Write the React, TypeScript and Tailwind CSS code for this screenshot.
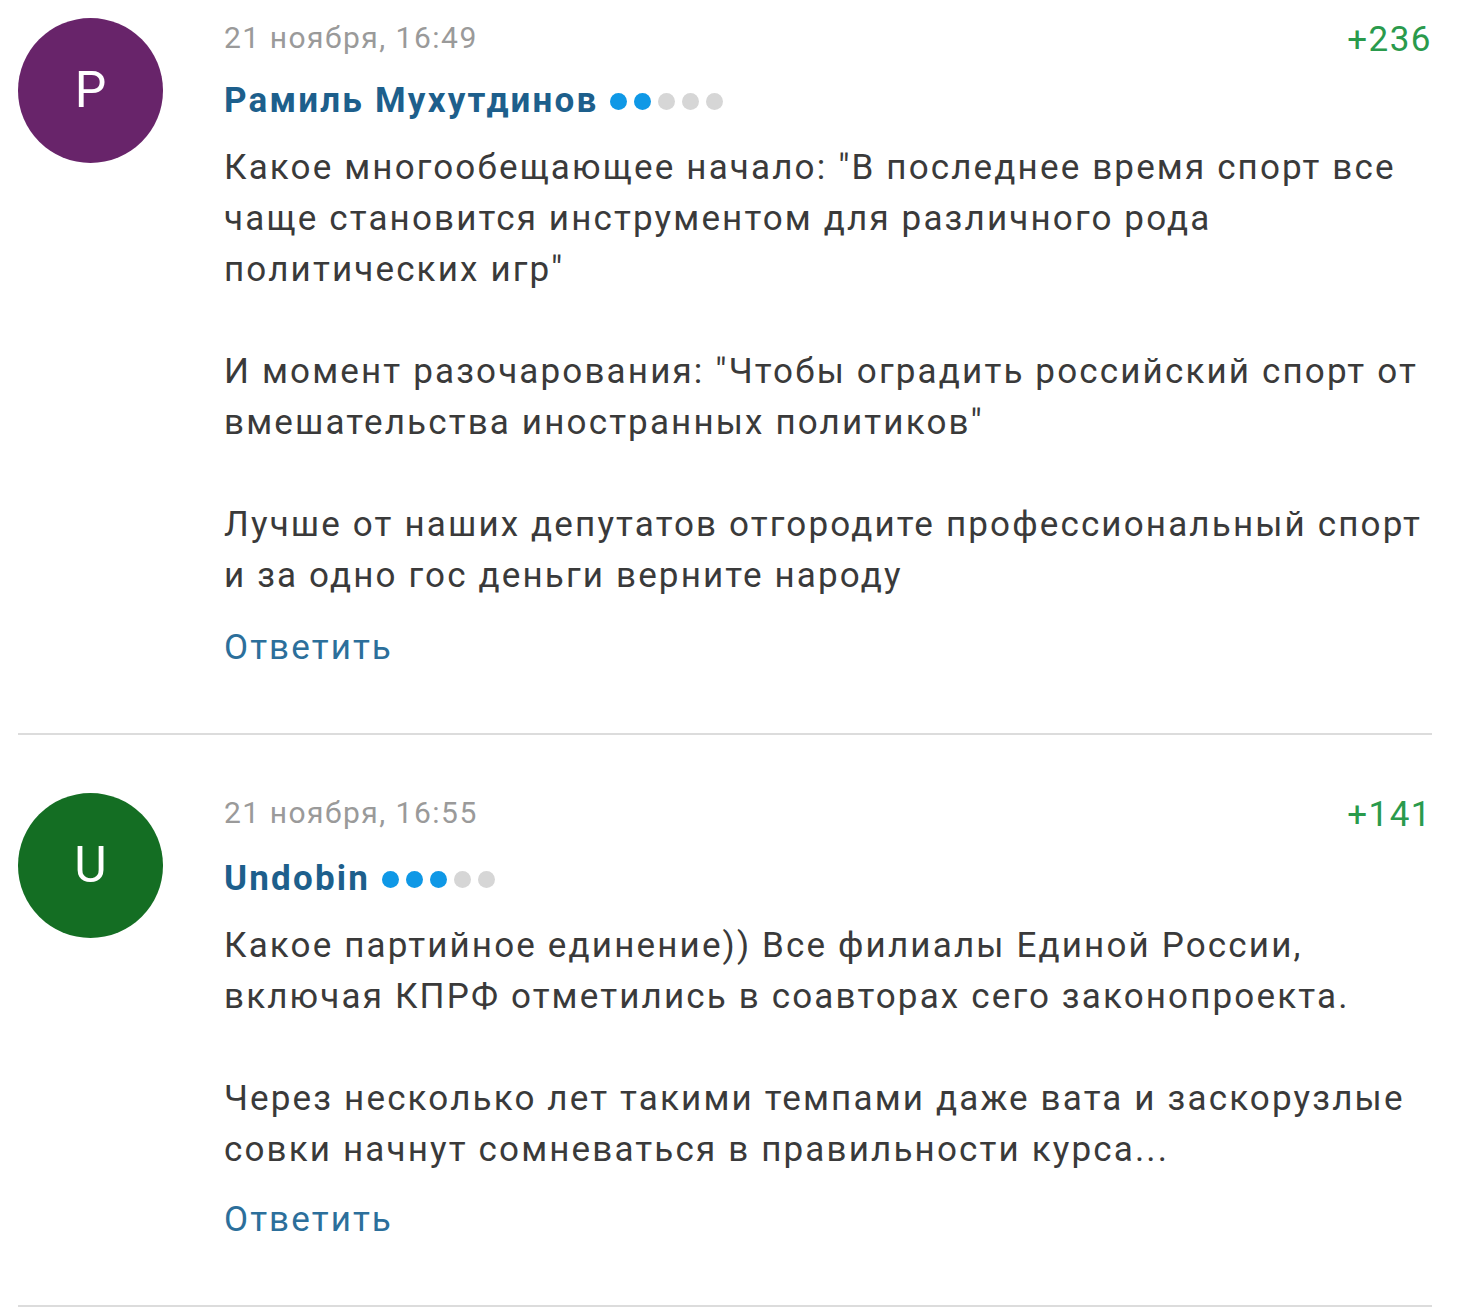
import React from "react";

type Comment = {
  letter: string;
  color: string;
  date: string;
  name: string;
  score: string;
  dots: number;
  paragraphs: string[][];
};

const comments: Comment[] = [
  {
    letter: "P",
    color: "bg-[#68246a]",
    date: "21 ноября, 16:49",
    name: "Рамиль Мухутдинов",
    score: "+236",
    dots: 2,
    paragraphs: [
      [
        "Какое многообещающее начало: \"В последнее время спорт все",
        "чаще становится инструментом для различного рода",
        "политических игр\"",
      ],
      [
        "И момент разочарования: \"Чтобы оградить российский спорт от",
        "вмешательства иностранных политиков\"",
      ],
      [
        "Лучше от наших депутатов отгородите профессиональный спорт",
        "и за одно гос деньги верните народу",
      ],
    ],
  },
  {
    letter: "U",
    color: "bg-[#146e23]",
    date: "21 ноября, 16:55",
    name: "Undobin",
    score: "+141",
    dots: 3,
    paragraphs: [
      [
        "Какое партийное единение)) Все филиалы Единой России,",
        "включая КПРФ отметились в соавторах сего законопроекта.",
      ],
      [
        "Через несколько лет такими темпами даже вата и заскорузлые",
        "совки начнут сомневаться в правильности курса...",
      ],
    ],
  },
];

function Dots({ n }: { n: number }) {
  return (
    <span className="ml-[12px] inline-flex items-center gap-[7px]">
      {[0, 1, 2, 3, 4].map((i) => (
        <span
          key={i}
          className={
            "inline-block h-[17px] w-[17px] rounded-full " +
            (i < n ? "bg-[#0f98e6]" : "bg-[#d6d6d6]")
          }
        />
      ))}
    </span>
  );
}

function CommentItem({ c, first }: { c: Comment; first: boolean }) {
  return (
    <div
      className={
        "flex border-b-[2px] border-[#dcdcdc] " +
        (first ? "pt-[18px] pb-[60px]" : "pt-[58px] pb-[60px]")
      }
    >
      <div
        className={
          "flex h-[145px] w-[145px] shrink-0 items-center justify-center rounded-full text-[50px] text-white " +
          c.color
        }
      >
        {c.letter}
      </div>
      <div className="ml-[61px] flex-1">
        <div className="flex items-start justify-between">
          <div className="h-[40px] text-[30px] leading-[40px] tracking-[1.5px] text-[#9a9a9a]">
            {c.date}
          </div>
          <div className="text-[35px] leading-[44px] tracking-[1.5px] text-[#2a9a4c]">{c.score}</div>
        </div>
        <div
          className={
            "flex items-center text-[35px] font-bold leading-[50px] tracking-[2.2px] text-[#1d5f8c] " +
            (first ? "mt-[14px]" : "mt-[17px]")
          }
        >
          {c.name}
          <Dots n={c.dots} />
        </div>
        <div className="mt-[16px] text-[35px] leading-[51px] tracking-[2.15px] text-[#3a3a3a]">
          {c.paragraphs.map((p, pi) => (
            <div key={pi} className={pi > 0 ? "mt-[51px]" : ""}>
              {p.map((line, li) => (
                <div key={li} className="whitespace-nowrap">
                  {line}
                </div>
              ))}
            </div>
          ))}
        </div>
        <div
          className={
            "text-[35px] leading-[51px] tracking-[2.1px] text-[#2c6f9b] " +
            (first ? "mt-[21px]" : "mt-[19px]")
          }
        >
          Ответить
        </div>
      </div>
    </div>
  );
}

export default function App() {
  return (
    <div
      className="min-h-[1316px] w-[1460px] bg-white pl-[18px] pr-[28px]"
      style={{ fontFamily: "Roboto, 'Noto Sans', sans-serif" }}
    >
      {comments.map((c, i) => (
        <CommentItem key={i} c={c} first={i === 0} />
      ))}
    </div>
  );
}
